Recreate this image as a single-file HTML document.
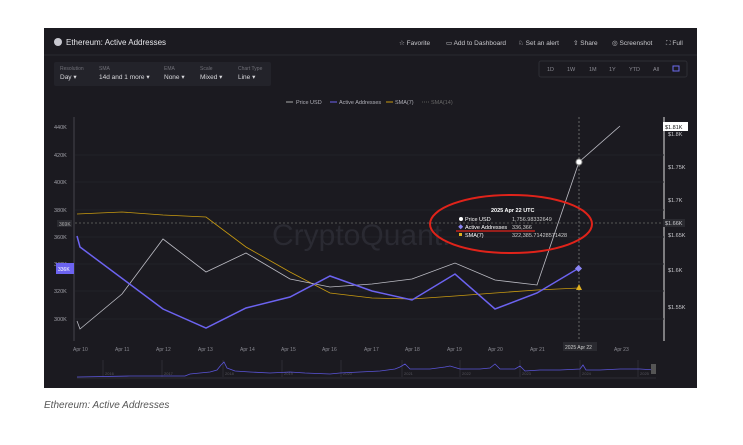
<!DOCTYPE html>
<html><head><meta charset="utf-8"><style>
body{margin:0;width:743px;height:440px;background:#fff;overflow:hidden;font-family:"Liberation Sans",sans-serif}
</style></head><body>
<svg width="743" height="440" xmlns="http://www.w3.org/2000/svg" font-family="Liberation Sans, sans-serif">
<rect x="44" y="28" width="653" height="360" fill="#1b1a20"/>
<line x1="44" y1="55" x2="697" y2="55" stroke="#2a2930"/>
<circle cx="58" cy="42" r="4" fill="#c8c8d0"/>
<text x="66" y="45" font-size="8" fill="#e6e6ea">Ethereum: Active Addresses</text>
<g font-size="6.5" fill="#c8c8cc">
<text x="399" y="45">☆ Favorite</text><text x="446" y="45">▭ Add to Dashboard</text>
<text x="518" y="45">♘ Set an alert</text><text x="573" y="45">⇧ Share</text>
<text x="612" y="45">◎ Screenshot</text><text x="666" y="45">⛶ Full</text>
</g>
<rect x="54" y="62" width="217" height="24" fill="#23232a" rx="2"/>
<g font-size="5" fill="#707078"><text x="60" y="70">Resolution</text><text x="99" y="70">SMA</text><text x="164" y="70">EMA</text><text x="200" y="70">Scale</text><text x="238" y="70">Chart Type</text></g>
<g font-size="6.5" fill="#d8d8dc"><text x="60" y="79">Day ▾</text><text x="99" y="79">14d and 1 more ▾</text><text x="164" y="79">None ▾</text><text x="200" y="79">Mixed ▾</text><text x="238" y="79">Line ▾</text></g>
<rect x="539" y="61" width="148" height="16" fill="none" stroke="#2d2d34" rx="2"/>
<g font-size="5.5" fill="#8a8a92"><text x="547" y="71">1D</text><text x="567" y="71">1W</text><text x="589" y="71">1M</text><text x="609" y="71">1Y</text><text x="629" y="71">YTD</text><text x="653" y="71">All</text></g>
<rect x="673" y="66" width="6" height="5" fill="none" stroke="#6c6cf0"/>
<g font-size="5.5" fill="#b0b0b8"><line x1="286" y1="102" x2="293" y2="102" stroke="#aaa"/><text x="296" y="104">Price USD</text>
<line x1="330" y1="102" x2="337" y2="102" stroke="#6c63f0"/><text x="339" y="104">Active Addresses</text>
<line x1="386" y1="102" x2="393" y2="102" stroke="#c89a10"/><text x="395" y="104">SMA(7)</text>
<line x1="422" y1="102" x2="429" y2="102" stroke="#555" stroke-dasharray="1,1"/><text x="431" y="104" fill="#666">SMA(14)</text></g>
<line x1="74" y1="117" x2="74" y2="341" stroke="#44444c"/>
<line x1="664" y1="117" x2="664" y2="341" stroke="#e0e0e0"/>
<g stroke="#222229"><line x1="75" y1="155" x2="664" y2="155"/><line x1="75" y1="182" x2="664" y2="182"/><line x1="75" y1="210" x2="664" y2="210"/><line x1="75" y1="237" x2="664" y2="237"/><line x1="75" y1="264" x2="664" y2="264"/><line x1="75" y1="291" x2="664" y2="291"/><line x1="75" y1="319" x2="664" y2="319"/></g>
<g font-size="5.5" fill="#a0a0a8"><text x="54" y="129">440K</text><text x="54" y="157">420K</text><text x="54" y="184">400K</text><text x="54" y="212">380K</text><text x="54" y="239">360K</text><text x="54" y="266">340K</text><text x="54" y="293">320K</text><text x="54" y="321">300K</text></g>
<rect x="57" y="220" width="15" height="7" fill="#2a2a30"/><text x="59" y="226" font-size="5" fill="#aaa">369K</text>
<rect x="56" y="263" width="18" height="11" fill="#6c63f0"/><text x="58" y="271" font-size="5" fill="#fff">336K</text>
<text x="272" y="245" font-size="30" fill="#2a2a32">CryptoQuant.</text>
<line x1="75" y1="223" x2="664" y2="223" stroke="#555" stroke-dasharray="2,2"/>
<line x1="579" y1="117" x2="579" y2="341" stroke="#666" stroke-dasharray="2,2"/>
<polyline fill="none" stroke="#c89a10" stroke-width="0.8" points="77,214 122,212 163,215 206,217 246,247 290,272 330,293 372,298 412,299 455,296 495,293 537,290 579,288"/>
<polyline fill="none" stroke="#bcbcc4" stroke-width="0.8" points="77,321 80,329 122,294 163,239 206,272 246,253 290,279 330,287 372,284 412,279 455,263 495,280 537,285 579,162 620,126"/>
<polyline fill="none" stroke="#6c63f0" stroke-width="1.5" points="77,236 80,247 163,309 206,328 246,308 290,297 330,276 372,291 412,300 455,274 495,309 537,293 579,268"/>
<circle cx="579" cy="162" r="3" fill="#fff" stroke="#888"/>
<rect x="576" y="266" width="5" height="5" fill="#8a84f4" transform="rotate(45 578.5 268.5)"/>
<polygon points="579,284 582,290 576,290" fill="#e0b020"/>
<g font-size="5.5" fill="#c8c8cc"><rect x="663" y="122" width="25" height="9" fill="#fff"/><text x="665" y="129" fill="#111">$1.81K</text><text x="668" y="136">$1.8K</text><text x="668" y="169">$1.75K</text><text x="668" y="202">$1.7K</text><rect x="663" y="219" width="22" height="8" fill="#2a2a30"/><text x="665" y="225">$1.66K</text><text x="668" y="237">$1.65K</text><text x="668" y="272">$1.6K</text><text x="668" y="309">$1.55K</text></g>
<g font-size="5.5" fill="#fff"><text x="491" y="212" font-weight="bold">2025 Apr 22 UTC</text>
<circle cx="461" cy="219" r="2" fill="#fff"/><text x="465" y="221">Price USD</text><text x="512" y="221" fill="#ccc">1,756.98332649</text>
<rect x="459" y="225" width="3.5" height="3.5" fill="#8a84f4" transform="rotate(45 460.7 226.7)"/><text x="465" y="229">Active Addresses</text><text x="512" y="229" fill="#ccc">336,366</text>
<rect x="459" y="233" width="3" height="3" fill="#e0b020"/><text x="465" y="237">SMA(7)</text><text x="512" y="237" fill="#ccc">322,385.71428571428</text></g>
<ellipse cx="511" cy="224" rx="81" ry="29" fill="none" stroke="#e0231a" stroke-width="2"/>
<line x1="456" y1="231" x2="535" y2="231" stroke="#e0231a" stroke-width="1.3"/>
<g font-size="5" fill="#8a8a92"><text x="73" y="351">Apr 10</text><text x="115" y="351">Apr 11</text><text x="156" y="351">Apr 12</text><text x="198" y="351">Apr 13</text><text x="240" y="351">Apr 14</text><text x="281" y="351">Apr 15</text><text x="322" y="351">Apr 16</text><text x="364" y="351">Apr 17</text><text x="405" y="351">Apr 18</text><text x="447" y="351">Apr 19</text><text x="488" y="351">Apr 20</text><text x="530" y="351">Apr 21</text><text x="614" y="351">Apr 23</text></g>
<rect x="563" y="342" width="34" height="9" fill="#2a2a30"/><text x="565" y="349" font-size="5" fill="#ccc">2025 Apr 22</text>
<g stroke="#2c2c33"><line x1="103" y1="360" x2="103" y2="377"/><line x1="162" y1="360" x2="162" y2="377"/><line x1="223" y1="360" x2="223" y2="377"/><line x1="282" y1="360" x2="282" y2="377"/><line x1="341" y1="360" x2="341" y2="377"/><line x1="402" y1="360" x2="402" y2="377"/><line x1="460" y1="360" x2="460" y2="377"/><line x1="520" y1="360" x2="520" y2="377"/><line x1="580" y1="360" x2="580" y2="377"/><line x1="638" y1="360" x2="638" y2="377"/></g>
<g font-size="4" fill="#55555c"><text x="105" y="375">2016</text><text x="164" y="375">2017</text><text x="225" y="375">2018</text><text x="284" y="375">2019</text><text x="343" y="375">2020</text><text x="404" y="375">2021</text><text x="462" y="375">2022</text><text x="522" y="375">2023</text><text x="582" y="375">2024</text><text x="640" y="375">2025</text></g>
<line x1="77" y1="378" x2="656" y2="378" stroke="#2c2c33"/>
<polyline fill="none" stroke="#5a54d8" stroke-width="0.8" points="77,377 130,376 185,376 190,374 200,373 210,372 217,370 221,365 224,362 227,368 235,371 250,372 270,373 290,372 305,373 330,374 340,373 360,372 380,371 395,369 400,367 405,364 410,369 430,369 445,367 450,366 460,369 480,369 490,368 495,364 500,369 515,369 520,366 525,371 540,370 560,370 580,369 583,365 586,370 600,370 620,369 640,369 655,370"/>
<rect x="651" y="364" width="5" height="10" fill="#555" />
<text x="44" y="408" font-size="10" font-style="italic" fill="#555">Ethereum: Active Addresses</text>
</svg>
</body></html>
